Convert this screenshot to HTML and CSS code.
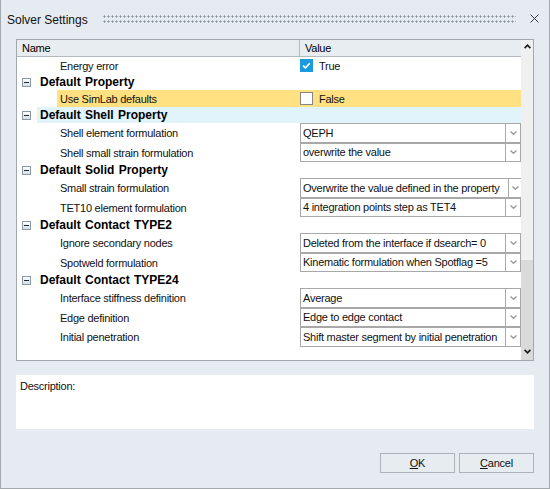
FILE: index.html
```html
<!DOCTYPE html>
<html>
<head>
<meta charset="utf-8">
<link rel="stylesheet" href="styles.css">
</head>
<body>
<div class="window">
  <div class="titlebar">
    <span class="title">Solver Settings</span>
    <div class="grip"></div>
    <span class="close"><svg width="9" height="9" viewBox="0 0 9 9"><path d="M0.5 0.5 L8.5 8.5 M8.5 0.5 L0.5 8.5" stroke="#3c3c3c" stroke-width="1" fill="none"/></svg></span>
  </div>

  <div class="grid">
    <div class="table">
      <div class="thead">
        <div class="th th-name">Name</div>
        <div class="th th-value">Value</div>
      </div>
      <div class="tbody">
        <div class="prop plain">
          <div class="name">Energy error</div>
          <div class="value"><span class="check on"><svg width="13" height="13" viewBox="0 0 13 13"><path d="M3 6.6 L5.4 8.8 L9.8 4.2" stroke="#fff" stroke-width="1.6" fill="none"/></svg></span><span>True</span></div>
        </div>
        <div class="group"><span class="toggle"><span class="minus"></span></span><span class="glabel">Default Property</span></div>
        <div class="prop plain selected">
          <div class="name">Use SimLab defaults</div>
          <div class="value"><span class="check off"></span><span>False</span></div>
        </div>
        <div class="group selected"><span class="toggle"><span class="minus"></span></span><span class="glabel">Default Shell Property</span></div>
        <div class="prop combo-row">
          <div class="name">Shell element formulation</div>
          <div class="value"><div class="combo"><span class="combo-text">QEPH</span><span class="combo-btn"><svg width="7" height="4" viewBox="0 0 7 4"><polyline points="0.5,0.5 3.5,3.2 6.5,0.5" stroke="#9a9a9a" stroke-width="1.4" fill="none"/></svg></span></div></div>
        </div>
        <div class="prop combo-row">
          <div class="name">Shell small strain formulation</div>
          <div class="value"><div class="combo"><span class="combo-text">overwrite the value</span><span class="combo-btn"><svg width="7" height="4" viewBox="0 0 7 4"><polyline points="0.5,0.5 3.5,3.2 6.5,0.5" stroke="#9a9a9a" stroke-width="1.4" fill="none"/></svg></span></div></div>
        </div>
        <div class="group"><span class="toggle"><span class="minus"></span></span><span class="glabel">Default Solid Property</span></div>
        <div class="prop combo-row">
          <div class="name">Small strain formulation</div>
          <div class="value"><div class="combo"><span class="combo-text">Overwrite the value defined in the property</span><span class="combo-btn"><svg width="7" height="4" viewBox="0 0 7 4"><polyline points="0.5,0.5 3.5,3.2 6.5,0.5" stroke="#9a9a9a" stroke-width="1.4" fill="none"/></svg></span></div></div>
        </div>
        <div class="prop combo-row">
          <div class="name">TET10 element formulation</div>
          <div class="value"><div class="combo"><span class="combo-text">4 integration points step as TET4</span><span class="combo-btn"><svg width="7" height="4" viewBox="0 0 7 4"><polyline points="0.5,0.5 3.5,3.2 6.5,0.5" stroke="#9a9a9a" stroke-width="1.4" fill="none"/></svg></span></div></div>
        </div>
        <div class="group"><span class="toggle"><span class="minus"></span></span><span class="glabel">Default Contact TYPE2</span></div>
        <div class="prop combo-row">
          <div class="name">Ignore secondary nodes</div>
          <div class="value"><div class="combo"><span class="combo-text">Deleted from the interface if dsearch= 0</span><span class="combo-btn"><svg width="7" height="4" viewBox="0 0 7 4"><polyline points="0.5,0.5 3.5,3.2 6.5,0.5" stroke="#9a9a9a" stroke-width="1.4" fill="none"/></svg></span></div></div>
        </div>
        <div class="prop combo-row">
          <div class="name">Spotweld formulation</div>
          <div class="value"><div class="combo"><span class="combo-text">Kinematic formulation when Spotflag =5</span><span class="combo-btn"><svg width="7" height="4" viewBox="0 0 7 4"><polyline points="0.5,0.5 3.5,3.2 6.5,0.5" stroke="#9a9a9a" stroke-width="1.4" fill="none"/></svg></span></div></div>
        </div>
        <div class="group"><span class="toggle"><span class="minus"></span></span><span class="glabel">Default Contact TYPE24</span></div>
        <div class="prop combo-row">
          <div class="name">Interface stiffness definition</div>
          <div class="value"><div class="combo"><span class="combo-text">Average</span><span class="combo-btn"><svg width="7" height="4" viewBox="0 0 7 4"><polyline points="0.5,0.5 3.5,3.2 6.5,0.5" stroke="#9a9a9a" stroke-width="1.4" fill="none"/></svg></span></div></div>
        </div>
        <div class="prop combo-row">
          <div class="name">Edge definition</div>
          <div class="value"><div class="combo"><span class="combo-text">Edge to edge contact</span><span class="combo-btn"><svg width="7" height="4" viewBox="0 0 7 4"><polyline points="0.5,0.5 3.5,3.2 6.5,0.5" stroke="#9a9a9a" stroke-width="1.4" fill="none"/></svg></span></div></div>
        </div>
        <div class="prop combo-row">
          <div class="name">Initial penetration</div>
          <div class="value"><div class="combo"><span class="combo-text">Shift master segment by initial penetration</span><span class="combo-btn"><svg width="7" height="4" viewBox="0 0 7 4"><polyline points="0.5,0.5 3.5,3.2 6.5,0.5" stroke="#9a9a9a" stroke-width="1.4" fill="none"/></svg></span></div></div>
        </div>
      </div>
    </div>
    <div class="scrollbar">
      <div class="sb-up"><svg width="7" height="5" viewBox="0 0 7 5"><polyline points="0.6,4.2 3.5,1.2 6.4,4.2" stroke="#1e1e1e" stroke-width="1.7" fill="none"/></svg></div>
      <div class="sb-track"></div>
      <div class="sb-thumb"></div>
      <div class="sb-down"><svg width="7" height="5" viewBox="0 0 7 5"><polyline points="0.6,0.8 3.5,3.8 6.4,0.8" stroke="#1e1e1e" stroke-width="1.7" fill="none"/></svg></div>
    </div>
  </div>

  <div class="description">Description:</div>

  <div class="actions">
    <button class="btn"><u>O</u>K</button>
    <button class="btn"><u>C</u>ancel</button>
  </div>
</div>
</body>
</html>
```

FILE: styles.css
```css
body {
  margin: 0;
  background: #e5ebf0;
}

.window {
  width: 550px;
  height: 489px;
  box-sizing: border-box;
  border: 1px solid #a4a9ae;
  border-top: none;
  background: #e5ebf0;
  font-family: "Liberation Sans", Arial, sans-serif;
  font-size: 11px;
  letter-spacing: -0.25px;
  color: #000;
  display: flex;
  flex-direction: column;
  padding: 0 15px 15px;
}

/* title bar */
.titlebar {
  margin: 0 -15px;
  padding: 0 10px 0 6px;
  height: 39px;
  display: flex;
  align-items: center;
}

.title {
  font-size: 12px;
  letter-spacing: 0;
  color: #111;
}

.grip {
  flex: 1;
  height: 9px;
  margin: -1px 14px 0 15px;
  background-image: radial-gradient(circle at 1.5px 1.5px, #8a949c 0.9px, transparent 1.2px);
  background-size: 4px 5px;
}

.close {
  width: 9px;
  height: 9px;
  display: flex;
  margin-top: -2px;
}

/* property grid */
.grid {
  height: 322px;
  box-sizing: border-box;
  border: 1px solid #a3a8ad;
  display: flex;
  background: #fff;
}

.table {
  flex: 1;
  overflow: hidden;
  display: flex;
  flex-direction: column;
}

.thead {
  height: 17px;
  box-sizing: border-box;
  border-bottom: 1px solid #b3b9be;
  background: #e8edf1;
  display: flex;
  flex: none;
}

.th {
  line-height: 16px;
  box-sizing: border-box;
}

.th-name {
  width: 283px;
  padding-left: 5px;
  border-right: 1px solid #b3b9be;
}

.th-value {
  flex: 1;
  padding-left: 5px;
}

.tbody {
  display: flex;
  flex-direction: column;
}

.group {
  display: flex;
  align-items: center;
  height: 16px;
  flex: none;
}

.toggle {
  width: 9px;
  height: 9px;
  box-sizing: border-box;
  margin: 0 6px 0 5px;
  border: 1px solid #8b9aa8;
  background: linear-gradient(#ffffff, #d5dde4);
  display: flex;
  align-items: center;
  justify-content: center;
}

.minus {
  width: 5px;
  height: 1px;
  background: #1c2733;
}

.glabel {
  flex: 1;
  align-self: stretch;
  display: flex;
  align-items: center;
  padding-left: 3px;
  font-weight: bold;
  font-size: 12px;
  letter-spacing: 0;
  word-spacing: 1px;
  color: #000;
}

.group.selected .glabel {
  background: #e1f4fb;
}

.prop {
  display: flex;
  margin-left: 40px;
  flex: none;
}

.prop.plain {
  height: 17px;
}

.prop.combo-row {
  height: 19.5px;
}

.prop.selected {
  background: #ffe181;
}

.name {
  width: 242px;
  flex: none;
  box-sizing: border-box;
  padding: 1px 0 0 3px;
  display: flex;
  align-items: center;
  color: #111;
}

.value {
  width: 222px;
  flex: none;
  box-sizing: border-box;
  padding-left: 1px;
  display: flex;
  align-items: center;
  color: #111;
}

.check {
  width: 13px;
  height: 13px;
  box-sizing: border-box;
  margin-right: 6px;
  display: flex;
}

.check.on {
  background: #1b9ae0;
}

.check.off {
  background: #fff;
  border: 1px solid #858585;
}

.combo {
  align-self: stretch;
  flex: none;
  min-width: 221px;
  box-sizing: border-box;
  border: 1px solid #a8a8a8;
  background: #fff;
  display: flex;
}

.combo-text {
  flex: 1 0 auto;
  display: flex;
  align-items: center;
  padding: 0 8px 0 2px;
  white-space: nowrap;
}

.combo-btn {
  width: 15px;
  flex: none;
  box-sizing: border-box;
  border-left: 1px solid #a8a8a8;
  display: flex;
  align-items: center;
  justify-content: center;
}

/* scrollbar */
.scrollbar {
  width: 12px;
  flex: none;
  background: #f0f0f0;
  display: flex;
  flex-direction: column;
}

.sb-up {
  height: 17px;
  display: flex;
  align-items: center;
  justify-content: center;
  padding-bottom: 4px;
  box-sizing: border-box;
}

.sb-track {
  flex: 1;
}

.sb-thumb {
  height: 88px;
  background: #dadada;
}

.sb-down {
  height: 12px;
  background: #dadada;
  display: flex;
  justify-content: center;
  padding-top: 1px;
  box-sizing: border-box;
}

/* description */
.description {
  margin-top: 14px;
  height: 54px;
  box-sizing: border-box;
  background: #fff;
  padding: 5px 4px;
  line-height: 13px;
  color: #111;
}

/* buttons */
.actions {
  margin-top: 24px;
  display: flex;
  justify-content: flex-end;
  gap: 4px;
}

.btn {
  width: 75px;
  height: 20px;
  box-sizing: border-box;
  border: 1px solid #adb2b7;
  background: #e7ecf0;
  font-family: "Liberation Sans", Arial, sans-serif;
  font-size: 11px;
  letter-spacing: -0.2px;
  color: #111;
  padding: 0;
}
```
